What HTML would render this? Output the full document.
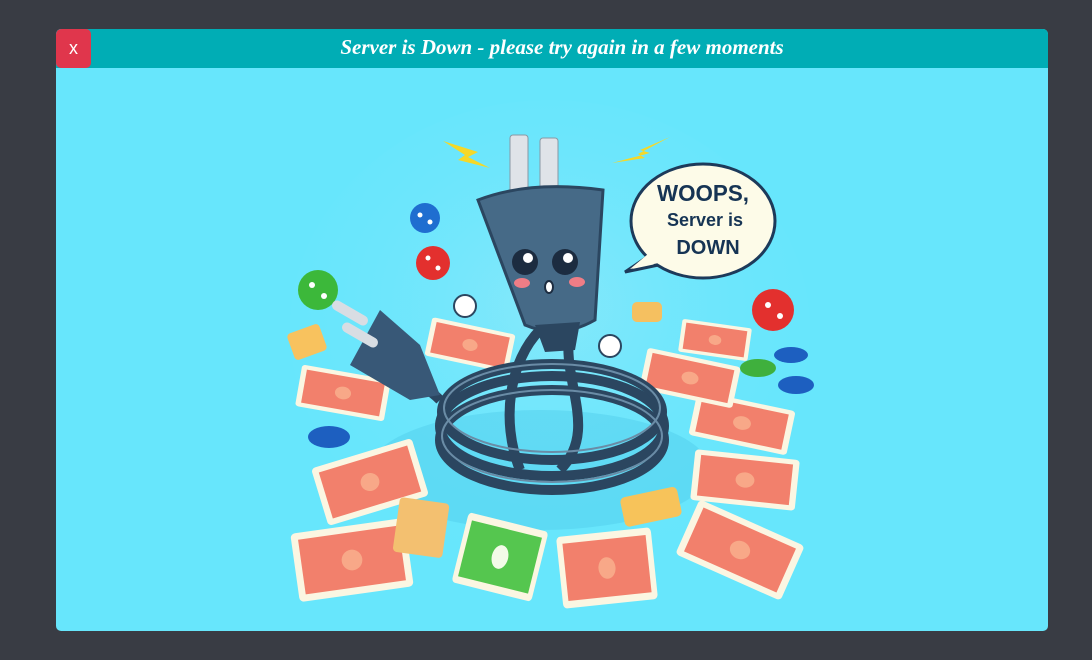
<!DOCTYPE html>
<html><head><meta charset="utf-8"><style>
html,body{margin:0;padding:0;width:1092px;height:660px;background:#393c44;overflow:hidden}
.modal{position:absolute;left:56px;top:29px;width:992px;height:602px;background:#67e6fc;border-radius:5px;overflow:hidden}
.hdr{position:absolute;left:0;top:0;width:992px;height:39px;background:#00adb5}
.x{position:absolute;left:0;top:0;width:35px;height:39px;background:#e0364c;border-radius:5px;color:#fff;font:18px "Liberation Sans",sans-serif;text-align:center;line-height:39px}
.t{position:absolute;left:0;width:1012px;top:0;text-align:center;color:#fff;font:italic bold 21px "Liberation Serif",serif;line-height:36px;letter-spacing:0px}
svg{position:absolute;left:0;top:0}
</style></head><body>
<div class="modal">
<div class="hdr"><div class="t">Server is Down - please try again in a few moments</div><div class="x">x</div></div>
</div>
<svg width="1092" height="660" viewBox="0 0 1092 660">
<defs>
<radialGradient id="bg" cx="0.5" cy="0.45" r="0.6"><stop offset="0" stop-color="#86e8fb"/><stop offset="1" stop-color="#67e6fc" stop-opacity="0"/></radialGradient>
<g id="card"><rect x="-50" y="-30" width="100" height="60" rx="4" fill="#fbf6e2"/><rect x="-44" y="-24" width="88" height="48" fill="#f2806c"/><circle r="9" fill="#f8a888"/></g>
</defs>
<ellipse cx="550" cy="330" rx="260" ry="230" fill="url(#bg)"/>
<ellipse cx="540" cy="470" rx="170" ry="60" fill="#4fcbec" opacity=".45"/>
<g transform="translate(343,393) rotate(10) scale(.9,.7)"><use href="#card"/></g>
<g transform="translate(470,345) rotate(12) scale(.85,.65)"><use href="#card"/></g>
<g transform="translate(370,482) rotate(-17) scale(1.05,1)"><use href="#card"/></g>
<g transform="translate(352,560) rotate(-8) scale(1.15,1.15)"><use href="#card"/></g>
<g transform="translate(500,557) rotate(14) scale(.82,1.2)"><rect x="-50" y="-30" width="100" height="60" rx="4" fill="#fbf6e2"/><rect x="-44" y="-24" width="88" height="48" fill="#55c64f"/><circle r="10" fill="#f2fbe8"/></g>
<g transform="translate(607,568) rotate(-6) scale(.95,1.2)"><use href="#card"/></g>
<g transform="translate(740,550) rotate(24) scale(1.15,1)"><use href="#card"/></g>
<g transform="translate(745,480) rotate(6) scale(1.05,.85)"><use href="#card"/></g>
<g transform="translate(742,423) rotate(12) scale(1,.75)"><use href="#card"/></g>
<g transform="translate(690,378) rotate(12) scale(.95,.7)"><use href="#card"/></g>
<g transform="translate(715,340) rotate(8) scale(.7,.55)"><use href="#card"/></g>
<rect x="396" y="500" width="50" height="55" rx="4" fill="#f3c070" transform="rotate(8 420 528)"/>
<rect x="622" y="492" width="58" height="30" rx="5" fill="#f7c35a" transform="rotate(-12 650 507)"/>
<rect x="290" y="328" width="34" height="28" rx="4" fill="#f8c25e" transform="rotate(-20 307 342)"/>
<rect x="632" y="302" width="30" height="20" rx="5" fill="#f5c060"/>
<circle cx="425" cy="218" r="15" fill="#1f6ed0"/><circle cx="433" cy="263" r="17" fill="#e3302e"/>
<circle cx="318" cy="290" r="20" fill="#3cb83a"/><circle cx="773" cy="310" r="21" fill="#e3302e"/>
<g fill="#fff"><circle cx="420" cy="215" r="2.5"/><circle cx="430" cy="222" r="2.5"/><circle cx="428" cy="258" r="2.5"/><circle cx="438" cy="268" r="2.5"/><circle cx="312" cy="285" r="3"/><circle cx="324" cy="296" r="3"/><circle cx="768" cy="305" r="3"/><circle cx="780" cy="316" r="3"/></g>
<ellipse cx="329" cy="437" rx="21" ry="11" fill="#1d5fc0"/><ellipse cx="791" cy="355" rx="17" ry="8" fill="#1d5fc0"/><ellipse cx="796" cy="385" rx="18" ry="9" fill="#1d5fc0"/><ellipse cx="758" cy="368" rx="18" ry="9" fill="#3fb03d"/>
<g fill="none" stroke="#2b4660" stroke-width="10">
<ellipse cx="552" cy="440" rx="112" ry="50"/><ellipse cx="552" cy="426" rx="112" ry="50"/><ellipse cx="552" cy="412" rx="110" ry="48"/>
<path d="M520 470 C500 420 510 360 540 330"/><path d="M560 470 C600 430 560 380 570 330"/><path d="M440 400 C420 380 400 380 390 370"/>
</g>
<g fill="none" stroke="#6a8ca6" stroke-width="2"><ellipse cx="552" cy="408" rx="108" ry="44"/><ellipse cx="552" cy="436" rx="110" ry="46"/></g>
<path d="M350 365 L380 310 L420 345 L440 395 L410 400 Z" fill="#385877"/>
<rect x="330" y="308" width="40" height="10" rx="5" fill="#d8dde3" transform="rotate(30 350 313)"/>
<rect x="340" y="330" width="40" height="10" rx="5" fill="#d8dde3" transform="rotate(30 360 335)"/>
<rect x="510" y="135" width="18" height="65" rx="3" fill="#dfe3e8" stroke="#8a97a3"/>
<rect x="540" y="138" width="18" height="62" rx="3" fill="#dfe3e8" stroke="#8a97a3"/>
<path d="M478 200 Q530 180 603 190 L595 320 Q560 340 525 325 Z" fill="#466a87" stroke="#2b4660" stroke-width="3"/>
<path d="M535 325 L580 322 L575 350 L545 352 Z" fill="#2b4660"/>
<circle cx="525" cy="262" r="13" fill="#1c2c40"/><circle cx="565" cy="262" r="13" fill="#1c2c40"/>
<circle cx="528" cy="258" r="5" fill="#fff"/><circle cx="568" cy="258" r="5" fill="#fff"/>
<ellipse cx="522" cy="283" rx="8" ry="5" fill="#ef7d86"/><ellipse cx="577" cy="282" rx="8" ry="5" fill="#ef7d86"/>
<ellipse cx="549" cy="287" rx="4" ry="6" fill="#fff" stroke="#1c2c40" stroke-width="2"/>
<circle cx="465" cy="306" r="11" fill="#fff" stroke="#2b4660" stroke-width="2"/><circle cx="610" cy="346" r="11" fill="#fff" stroke="#2b4660" stroke-width="2"/>
<path d="M443 141 L478 152 L468 157 L490 168 L458 160 L465 155 Z" fill="#f5d828"/>
<path d="M670 137 L640 150 L650 153 L612 163 L645 158 L638 154 Z" fill="#f5d828"/>
<path d="M650 255 L625 272 L668 263 Z" fill="#fdfbe8" stroke="#1d3a5a" stroke-width="3"/>
<ellipse cx="703" cy="221" rx="72" ry="57" fill="#fdfbe8" stroke="#1d3a5a" stroke-width="3"/>
<path d="M648 254 L630 269 L668 261" fill="#fdfbe8"/>
<g font-family="Liberation Sans,sans-serif" font-weight="bold" fill="#163454" text-anchor="middle">
<text x="703" y="201" font-size="23" textLength="92" lengthAdjust="spacingAndGlyphs">WOOPS,</text>
<text x="705" y="226" font-size="18">Server is</text>
<text x="708" y="254" font-size="20">DOWN</text>
</g>
</svg>
</body></html>
